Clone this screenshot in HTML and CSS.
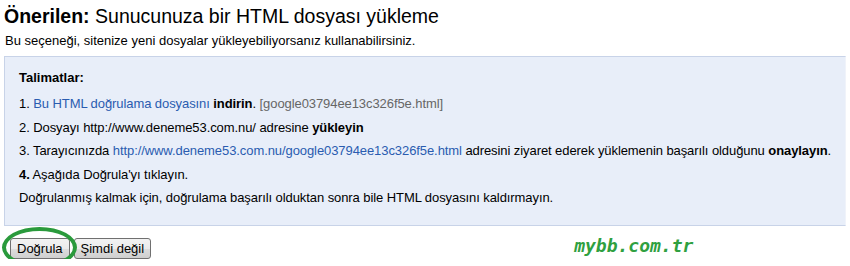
FILE: index.html
```html
<!DOCTYPE html>
<html lang="tr">
<head>
<meta charset="utf-8">
<link rel="stylesheet" href="styles.css">
</head>
<body>
<div class="page">
  <h1 class="title"><b>Önerilen:</b> Sunucunuza bir HTML dosyası yükleme</h1>
  <p class="sub">Bu seçeneği, sitenize yeni dosyalar yükleyebiliyorsanız kullanabilirsiniz.</p>
  <div class="box">
    <div class="head">Talimatlar:</div>
    <div class="line">1. <a class="link">Bu HTML doğrulama dosyasını</a> <b>indirin</b>. <span class="grey">[google03794ee13c326f5e.html]</span></div>
    <div class="line">2. Dosyayı http://www.deneme53.com.nu/ adresine <b>yükleyin</b></div>
    <div class="line">3. Tarayıcınızda <a class="link">http://www.deneme53.com.nu/google03794ee13c326f5e.html</a> adresini ziyaret ederek yüklemenin başarılı olduğunu <b>onaylayın</b>.</div>
    <div class="line"><b>4.</b> Aşağıda Doğrula'yı tıklayın.</div>
    <div class="line">Doğrulanmış kalmak için, doğrulama başarılı olduktan sonra bile HTML dosyasını kaldırmayın.</div>
  </div>
  <div class="actions">
    <div class="ring-wrap">
      <button class="btn">Doğrula</button>
      <span class="ring"></span>
    </div>
    <button class="btn">Şimdi değil</button>
    <span class="brand">mybb.com.tr</span>
  </div>
</div>
</body>
</html>
```
FILE: styles.css
```css
html, body { margin: 0; padding: 0; background: #fff; overflow: hidden; }
body { font-family: Arial, "Liberation Sans", sans-serif; color: #000; }
.page { padding: 4px 4px 0 4px; width: 842px; }
.title { margin: 0; font-size: 19.5px; font-weight: normal; line-height: 24px; }
.title b { font-weight: bold; }
.sub { margin: 5px 0 0 1px; font-size: 13px; line-height: 16px; }
.box {
  margin-top: 7px;
  background: #e8eef9;
  border: 1px solid #c8d3e8;
  border-right-color: #f0f3fa;
  padding: 13px 10px 19px 14px;
  font-size: 13px;
  letter-spacing: -0.08px;
  line-height: 16px;
}
.head { font-weight: bold; margin-bottom: 10px; letter-spacing: 0; }
.line { margin-bottom: 7.5px; white-space: nowrap; }
.line:last-child { margin-bottom: 0; }
.link { color: #2a5cb0; text-decoration: none; }
.grey { color: #666; }
.actions { display: flex; align-items: center; margin-top: 12px; gap: 4px; padding-left: 6px; }
.ring-wrap { position: relative; display: flex; }
.btn {
  font-family: Arial, "Liberation Sans", sans-serif;
  font-size: 13px;
  height: 21px;
  padding: 0 6px;
  border: 1px solid #707070;
  border-radius: 3px;
  background: linear-gradient(#f2f2f2 0%, #ebebeb 50%, #dddddd 51%, #cfcfcf 100%);
  color: #000;
  line-height: 19px;
}
.ring {
  position: absolute;
  left: -8px;
  top: -11px;
  width: 67px;
  height: 33px;
  border: 4px solid #2a9a3c;
  border-radius: 50%;
}
.brand {
  margin-left: 419px;
  margin-top: -6px;
  font-family: "DejaVu Sans Mono", monospace;
  font-weight: bold;
  font-style: italic;
  font-size: 18px;
  color: #2fa040;
}
```
